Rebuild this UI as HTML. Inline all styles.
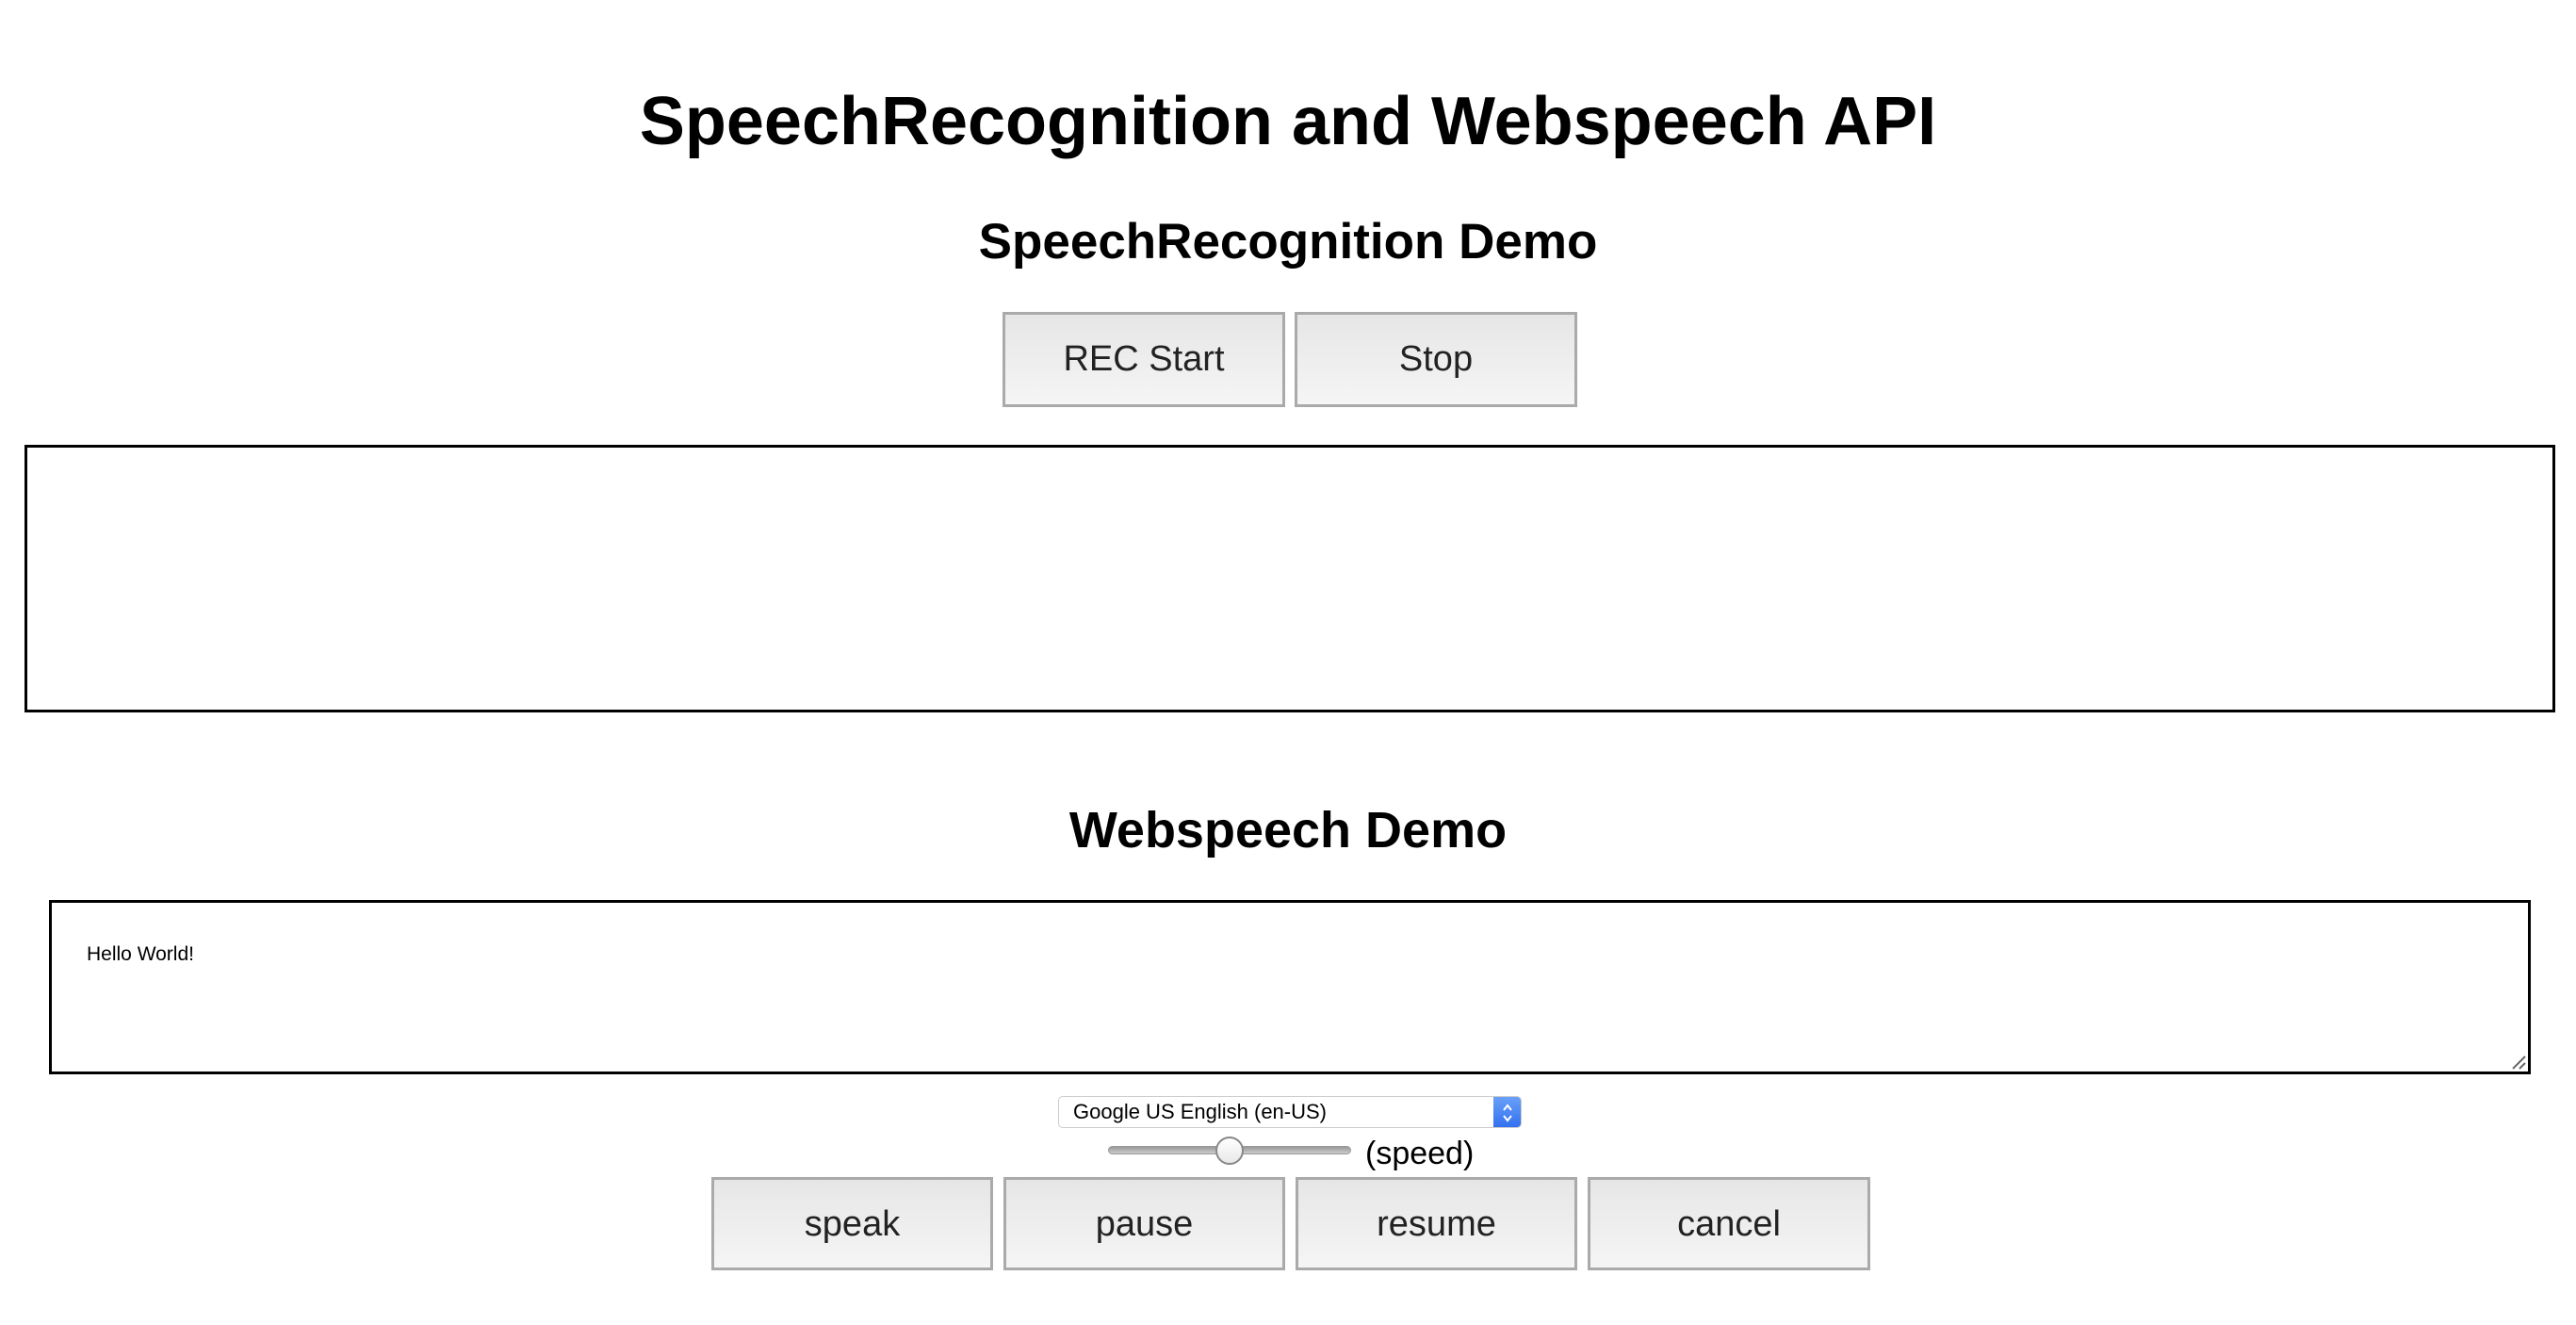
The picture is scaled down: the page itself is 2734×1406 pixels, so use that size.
<!DOCTYPE html>
<html><head><meta charset="utf-8"><style>
html,body{margin:0;padding:0;background:#fff;width:2734px;height:1406px;overflow:hidden;position:relative;font-family:"Liberation Sans",sans-serif;}
.a{position:absolute;}
h1,h2{margin:0;position:absolute;left:0;width:2734px;text-align:center;font-weight:bold;color:#000;white-space:nowrap;}
.btn{position:absolute;box-sizing:border-box;border:3px solid #aaa;background:linear-gradient(#e6e6e6,#f5f5f5);color:#222;font-size:38px;text-align:center;}
.box{position:absolute;box-sizing:border-box;border:3px solid #000;}
</style></head><body>
<h1 style="top:84px;font-size:72px;line-height:90px;">SpeechRecognition and Webspeech API</h1>
<h2 style="top:226px;font-size:53px;line-height:62px;">SpeechRecognition Demo</h2>
<div class="btn" style="left:1064px;top:331px;width:300px;height:101px;line-height:94px;">REC Start</div>
<div class="btn" style="left:1374px;top:331px;width:300px;height:101px;line-height:94px;">Stop</div>
<div class="box" style="left:26px;top:472px;width:2686px;height:284px;"></div>
<h2 style="top:850px;font-size:54px;line-height:62px;">Webspeech Demo</h2>
<div class="box" style="left:52px;top:955px;width:2634px;height:185px;"></div>
<div class="a" style="left:92px;top:1001px;font-size:21px;color:#000;">Hello World!</div>
<svg class="a" style="left:2664px;top:1118px" width="18" height="18"><path d="M3 16 L16 3 M10 16 L16 10" stroke="#666" stroke-width="2"/></svg>
<div class="a" style="left:1123px;top:1163px;width:492px;height:34px;box-sizing:border-box;border:1px solid #ccc;border-radius:5px;background:#fff;overflow:hidden;">
 <div class="a" style="left:15px;top:3px;font-size:22px;line-height:26px;color:#000;">Google US English (en-US)</div>
 <div class="a" style="right:0;top:0;width:29px;height:34px;background:linear-gradient(#6aa0f8,#2f6ef0);"></div>
 <svg class="a" style="right:7px;top:6px" width="14" height="22"><path d="M3 8 L7 3 L11 8 M3 14 L7 19 L11 14" stroke="#fff" stroke-width="2" fill="none"/></svg>
</div>
<div class="a" style="left:1176px;top:1216px;width:258px;height:9px;border-radius:5px;background:linear-gradient(#999,#ccc);border:1px solid #999;box-sizing:border-box;"></div>
<div class="a" style="left:1290px;top:1206px;width:30px;height:30px;border-radius:50%;background:linear-gradient(#fff,#e8e8e8);border:2px solid #888;box-sizing:border-box;"></div>
<div class="a" style="left:1449px;top:1204px;font-size:34px;line-height:40px;color:#000;">(speed)</div>
<div class="btn" style="left:755px;top:1249px;width:299px;height:99px;line-height:94px;">speak</div>
<div class="btn" style="left:1065px;top:1249px;width:299px;height:99px;line-height:94px;">pause</div>
<div class="btn" style="left:1375px;top:1249px;width:299px;height:99px;line-height:94px;">resume</div>
<div class="btn" style="left:1685px;top:1249px;width:300px;height:99px;line-height:94px;">cancel</div>
</body></html>
